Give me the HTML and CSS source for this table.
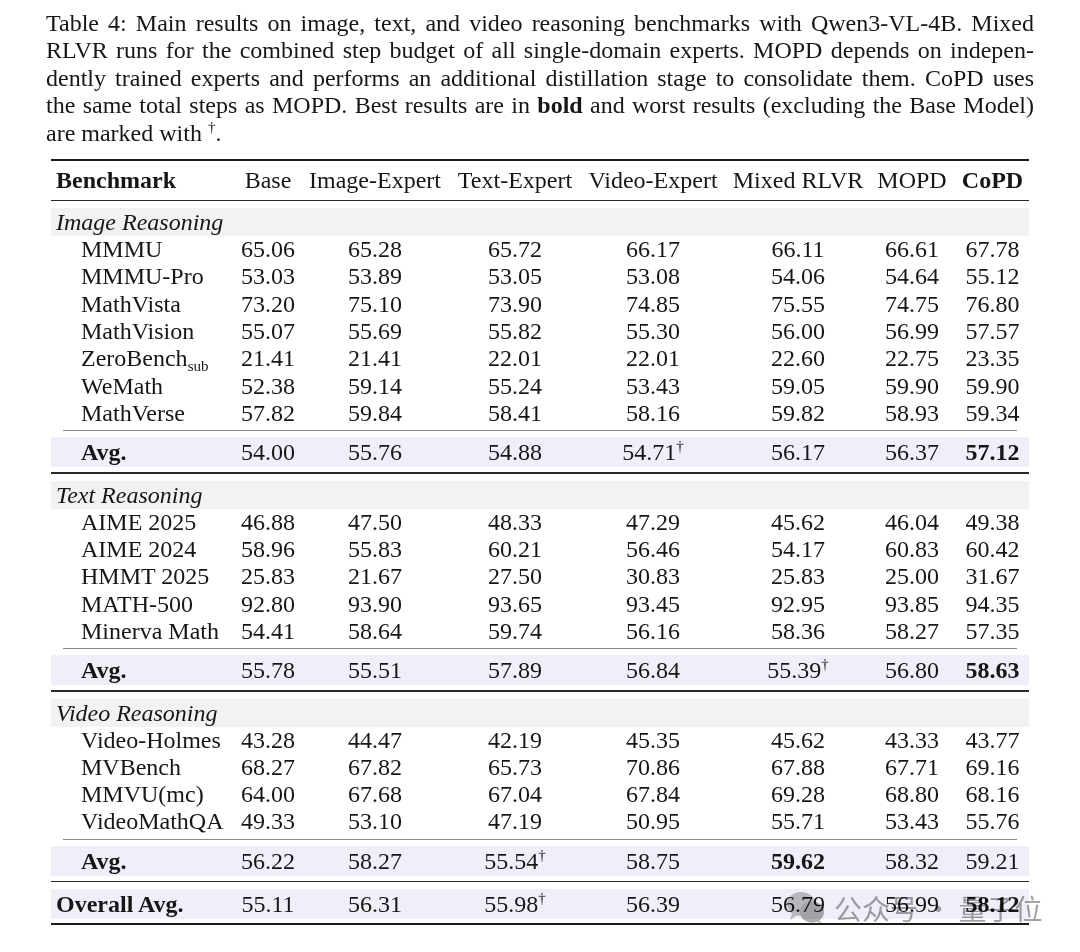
FILE: index.html
```html
<!DOCTYPE html>
<html lang="en">
<head>
    <meta charset="UTF-8">
    <meta name="viewport" content="width=device-width, initial-scale=1.0">
    <title>Table 4 - Main results</title>
    <link rel="stylesheet" href="styles.css">
</head>
<body>
    <div class="page">
        <div class="caption">
            <span class="line">Table 4: Main results on image, text, and video reasoning benchmarks with Qwen3-VL-4B. Mixed</span>
            <span class="line">RLVR runs for the combined step budget of all single-domain experts. MOPD depends on indepen-</span>
            <span class="line">dently trained experts and performs an additional distillation stage to consolidate them. CoPD uses</span>
            <span class="line">the same total steps as MOPD. Best results are in <b>bold</b> and worst results (excluding the Base Model)</span>
            <span class="line last">are marked with <sup class="dag">†</sup>.</span>
        </div>

        <div class="tbl">
            <div class="row head">
                <div class="name"><b>Benchmark</b></div>
                <div class="num">Base</div>
                <div class="num">Image-Expert</div>
                <div class="num">Text-Expert</div>
                <div class="num">Video-Expert</div>
                <div class="num">Mixed RLVR</div>
                <div class="num">MOPD</div>
                <div class="num"><b>CoPD</b></div>
            </div>

            <!-- Image reasoning -->
            <div class="section">Image Reasoning</div>
            <div class="row"><div class="name">MMMU</div><div class="num">65.06</div><div class="num">65.28</div><div class="num">65.72</div><div class="num">66.17</div><div class="num">66.11</div><div class="num">66.61</div><div class="num">67.78</div></div>
            <div class="row"><div class="name">MMMU-Pro</div><div class="num">53.03</div><div class="num">53.89</div><div class="num">53.05</div><div class="num">53.08</div><div class="num">54.06</div><div class="num">54.64</div><div class="num">55.12</div></div>
            <div class="row"><div class="name">MathVista</div><div class="num">73.20</div><div class="num">75.10</div><div class="num">73.90</div><div class="num">74.85</div><div class="num">75.55</div><div class="num">74.75</div><div class="num">76.80</div></div>
            <div class="row"><div class="name">MathVision</div><div class="num">55.07</div><div class="num">55.69</div><div class="num">55.82</div><div class="num">55.30</div><div class="num">56.00</div><div class="num">56.99</div><div class="num">57.57</div></div>
            <div class="row"><div class="name">ZeroBench<sub class="sub">sub</sub></div><div class="num">21.41</div><div class="num">21.41</div><div class="num">22.01</div><div class="num">22.01</div><div class="num">22.60</div><div class="num">22.75</div><div class="num">23.35</div></div>
            <div class="row"><div class="name">WeMath</div><div class="num">52.38</div><div class="num">59.14</div><div class="num">55.24</div><div class="num">53.43</div><div class="num">59.05</div><div class="num">59.90</div><div class="num">59.90</div></div>
            <div class="row"><div class="name">MathVerse</div><div class="num">57.82</div><div class="num">59.84</div><div class="num">58.41</div><div class="num">58.16</div><div class="num">59.82</div><div class="num">58.93</div><div class="num">59.34</div></div>
            <div class="cmid"></div>
            <div class="row avg"><div class="name">Avg.</div><div class="num">54.00</div><div class="num">55.76</div><div class="num">54.88</div><div class="num">54.71<sup class="dag">†</sup></div><div class="num">56.17</div><div class="num">56.37</div><div class="num"><b>57.12</b></div></div>
            <div class="midrule"></div>

            <!-- Text reasoning -->
            <div class="section">Text Reasoning</div>
            <div class="row"><div class="name">AIME 2025</div><div class="num">46.88</div><div class="num">47.50</div><div class="num">48.33</div><div class="num">47.29</div><div class="num">45.62</div><div class="num">46.04</div><div class="num">49.38</div></div>
            <div class="row"><div class="name">AIME 2024</div><div class="num">58.96</div><div class="num">55.83</div><div class="num">60.21</div><div class="num">56.46</div><div class="num">54.17</div><div class="num">60.83</div><div class="num">60.42</div></div>
            <div class="row"><div class="name">HMMT 2025</div><div class="num">25.83</div><div class="num">21.67</div><div class="num">27.50</div><div class="num">30.83</div><div class="num">25.83</div><div class="num">25.00</div><div class="num">31.67</div></div>
            <div class="row"><div class="name">MATH-500</div><div class="num">92.80</div><div class="num">93.90</div><div class="num">93.65</div><div class="num">93.45</div><div class="num">92.95</div><div class="num">93.85</div><div class="num">94.35</div></div>
            <div class="row"><div class="name">Minerva Math</div><div class="num">54.41</div><div class="num">58.64</div><div class="num">59.74</div><div class="num">56.16</div><div class="num">58.36</div><div class="num">58.27</div><div class="num">57.35</div></div>
            <div class="cmid"></div>
            <div class="row avg"><div class="name">Avg.</div><div class="num">55.78</div><div class="num">55.51</div><div class="num">57.89</div><div class="num">56.84</div><div class="num">55.39<sup class="dag">†</sup></div><div class="num">56.80</div><div class="num"><b>58.63</b></div></div>
            <div class="midrule"></div>

            <!-- Video reasoning -->
            <div class="section">Video Reasoning</div>
            <div class="row"><div class="name">Video-Holmes</div><div class="num">43.28</div><div class="num">44.47</div><div class="num">42.19</div><div class="num">45.35</div><div class="num">45.62</div><div class="num">43.33</div><div class="num">43.77</div></div>
            <div class="row"><div class="name">MVBench</div><div class="num">68.27</div><div class="num">67.82</div><div class="num">65.73</div><div class="num">70.86</div><div class="num">67.88</div><div class="num">67.71</div><div class="num">69.16</div></div>
            <div class="row"><div class="name">MMVU(mc)</div><div class="num">64.00</div><div class="num">67.68</div><div class="num">67.04</div><div class="num">67.84</div><div class="num">69.28</div><div class="num">68.80</div><div class="num">68.16</div></div>
            <div class="row"><div class="name">VideoMathQA</div><div class="num">49.33</div><div class="num">53.10</div><div class="num">47.19</div><div class="num">50.95</div><div class="num">55.71</div><div class="num">53.43</div><div class="num">55.76</div></div>
            <div class="cmid"></div>
            <div class="row avg"><div class="name">Avg.</div><div class="num">56.22</div><div class="num">58.27</div><div class="num">55.54<sup class="dag">†</sup></div><div class="num">58.75</div><div class="num"><b>59.62</b></div><div class="num">58.32</div><div class="num">59.21</div></div>
            <div class="midrule"></div>

            <div class="row avg overall"><div class="name">Overall Avg.</div><div class="num">55.11</div><div class="num">56.31</div><div class="num">55.98<sup class="dag">†</sup></div><div class="num">56.39</div><div class="num">56.79</div><div class="num">56.99</div><div class="num"><b>58.12</b></div></div>
        </div>

        <!-- watermark lies over the last row -->
        <div class="watermark">
            <svg class="wm-icon" width="40" height="34" viewBox="0 0 40 34">
                <ellipse cx="15" cy="13" rx="14" ry="12" fill="#c2c2c2"/>
                <path d="M6 22 L4 29 L11 24 Z" fill="#c2c2c2"/>
                <ellipse cx="26" cy="21" rx="12" ry="10.5" fill="#adadad"/>
                <path d="M33 29 L36 33 L30 30 Z" fill="#adadad"/>
            </svg>
            <span class="wm-text">公众号 · 量子位</span>
        </div>
    </div>
</body>
</html>
```

FILE: styles.css
```css
body {
    margin: 0;
    background-color: #fff;
    color: #161616;
    font-family: "Liberation Serif", "Times New Roman", serif;
    font-size: 24px;
}

.page {
    position: relative;
    width: 1080px;
    height: 952px;
    overflow: hidden;
}

/* Caption, justified like the paper */
.caption {
    width: 988px;
    margin-left: 46px;
    padding-top: 10px;
    line-height: 27.4px;
}

.caption .line {
    display: block;
    text-align: justify;
    text-align-last: justify;
}

.caption .line.last {
    text-align-last: left;
}

.dag {
    font-size: 15px;
    line-height: 0;
    vertical-align: 9px;
}

.sub {
    font-size: 15px;
    line-height: 0;
    vertical-align: -5px;
}

/* Table */
.tbl {
    width: 978px;
    margin: 12px 0 0 51px;
    border-bottom: 2px solid #1a1a1a;
    padding-bottom: 4px;
}

.row {
    display: grid;
    grid-template-columns: 187px 60px 154px 126px 150px 140px 88px 73px;
    height: 27.3px;
    line-height: 27.3px;
    white-space: nowrap;
}

.row .name {
    padding-left: 30px;
}

.row .num {
    text-align: center;
}

.head {
    height: 39px;
    line-height: 39px;
    border-top: 2px solid #1a1a1a;
    border-bottom: 1.5px solid #2a2a2a;
}

.head .name {
    padding-left: 5px;
}

.section {
    margin-top: 7px;
    height: 28px;
    line-height: 28px;
    padding-left: 5px;
    background-color: #f2f2f2;
    font-style: italic;
}

.cmid {
    height: 1px;
    margin: 3px 12px 6px;
    background-color: #8a8a8a;
}

.avg {
    height: 30px;
    line-height: 30px;
    background-color: #efeff9;
}

.avg .name {
    font-weight: bold;
}

.overall {
    margin-top: 7px;
}

.overall .name {
    padding-left: 5px;
}

.midrule {
    height: 1.5px;
    margin-top: 5px;
    background-color: #2a2a2a;
}

/* Watermark */
.watermark {
    position: absolute;
    left: 786px;
    top: 891px;
    display: flex;
    align-items: center;
    gap: 8px;
    mix-blend-mode: multiply;
}

.wm-text {
    font-family: "Noto Sans CJK SC", sans-serif;
    font-size: 28px;
    line-height: 34px;
    color: #a3a3a3;
    white-space: pre;
}
```
